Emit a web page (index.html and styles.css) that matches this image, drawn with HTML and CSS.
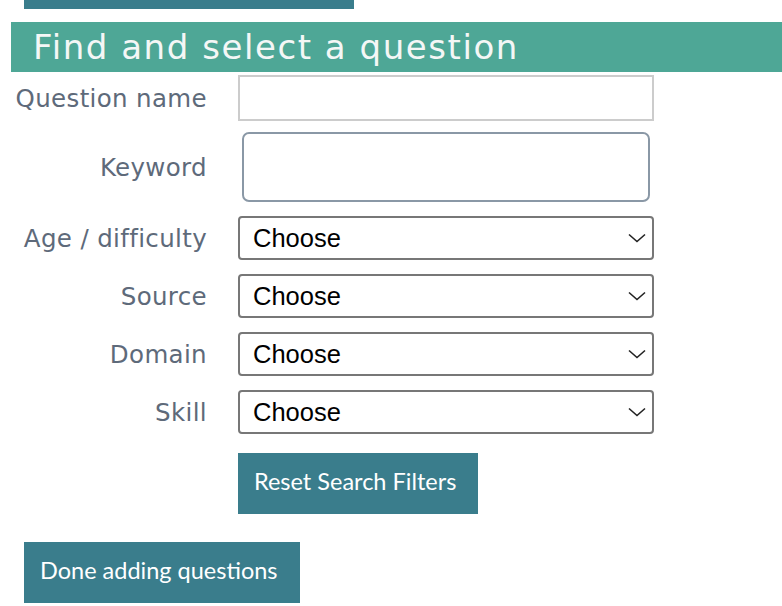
FILE: index.html
```html
<!DOCTYPE html>
<html>
<head>
<meta charset="utf-8">
<link rel="stylesheet" href="styles.css">
</head>
<body>
<div class="topbar"></div>
<h2 class="heading">Find and select a question</h2>
<form class="search">
  <div class="row row-name">
    <label class="lbl">Question name</label>
    <input class="txt" type="text">
  </div>
  <div class="row row-kw">
    <label class="lbl">Keyword</label>
    <input class="kw" type="text">
  </div>
  <div class="row row-sel">
    <label class="lbl">Age / difficulty</label>
    <div class="selwrap"><select class="sel"><option>Choose</option></select><svg class="chev" width="18" height="10" viewBox="0 0 18 10"><path d="M1 1.5 L9 8.5 L17 1.5" fill="none" stroke="#222" stroke-width="1.6"/></svg></div>
  </div>
  <div class="row row-sel">
    <label class="lbl">Source</label>
    <div class="selwrap"><select class="sel"><option>Choose</option></select><svg class="chev" width="18" height="10" viewBox="0 0 18 10"><path d="M1 1.5 L9 8.5 L17 1.5" fill="none" stroke="#222" stroke-width="1.6"/></svg></div>
  </div>
  <div class="row row-sel">
    <label class="lbl">Domain</label>
    <div class="selwrap"><select class="sel"><option>Choose</option></select><svg class="chev" width="18" height="10" viewBox="0 0 18 10"><path d="M1 1.5 L9 8.5 L17 1.5" fill="none" stroke="#222" stroke-width="1.6"/></svg></div>
  </div>
  <div class="row row-sel">
    <label class="lbl">Skill</label>
    <div class="selwrap"><select class="sel"><option>Choose</option></select><svg class="chev" width="18" height="10" viewBox="0 0 18 10"><path d="M1 1.5 L9 8.5 L17 1.5" fill="none" stroke="#222" stroke-width="1.6"/></svg></div>
  </div>
  <div class="row row-btn">
    <span class="lbl"></span>
    <button type="button" class="btn btn-reset">Reset Search Filters</button>
  </div>
</form>
<button type="button" class="btn btn-done">Done adding questions</button>
</body>
</html>
```
FILE: styles.css
```css
html, body {
  margin: 0;
  padding: 0;
  background: #fff;
}
body {
  width: 782px;
  overflow: hidden;
  font-family: "DejaVu Sans", sans-serif;
}
.topbar {
  margin-left: 24px;
  width: 330px;
  height: 9px;
  background: #3a7d8c;
}
.heading {
  margin: 13px 0 0 11px;
  height: 50px;
  padding-left: 22px;
  background: #4ea796;
  color: #f4f7f6;
  font-family: "DejaVu Sans", sans-serif;
  font-weight: normal;
  font-size: 34px;
  line-height: 50px;
  letter-spacing: 1.55px;
  box-sizing: border-box;
}
.search {
  display: flex;
  flex-direction: column;
  margin: 0;
}
.row {
  display: flex;
  align-items: center;
  gap: 31px;
}
.lbl {
  width: 207px;
  flex: none;
  text-align: right;
  color: #5e6a7a;
  font-size: 24.5px;
  letter-spacing: 0.35px;
  white-space: nowrap;
}
.row-name {
  margin-top: 3px;
}
.txt {
  width: 416px;
  height: 46px;
  box-sizing: border-box;
  border: 2px solid #cccccc;
  border-radius: 0;
  margin: 0;
  padding: 0 8px;
  font-size: 20px;
}
.row-kw {
  margin-top: 11px;
}
.kw {
  margin: 0 0 0 4px;
  width: 408px;
  height: 70px;
  box-sizing: border-box;
  border: 2px solid #8a98a6;
  border-radius: 7px;
  padding: 0 8px;
  font-size: 20px;
}
.row-sel {
  margin-top: 14px;
}
.selwrap {
  position: relative;
  width: 416px;
  height: 44px;
}
.sel {
  -webkit-appearance: none;
  appearance: none;
  width: 416px;
  height: 44px;
  box-sizing: border-box;
  border: 2px solid #777777;
  border-radius: 4px;
  background: #fff;
  color: #000;
  margin: 0;
  padding: 0 0 0 13px;
  font-family: "Liberation Sans", Arial, sans-serif;
  font-size: 25.5px;
}
.chev {
  position: absolute;
  right: 8px;
  top: 17px;
  pointer-events: none;
}
.row-btn {
  margin-top: 19px;
}
.btn {
  display: block;
  height: 61px;
  border: none;
  border-radius: 0;
  background: #3a7d8c;
  color: #fff;
  font-family: Lato, sans-serif;
  font-size: 23.5px;
  text-align: left;
  padding: 0 0 6px 16px;
  margin: 0;
  cursor: pointer;
}
.btn-reset {
  width: 240px;
}
.btn-done {
  width: 276px;
  margin: 28px 0 0 24px;
}
```
